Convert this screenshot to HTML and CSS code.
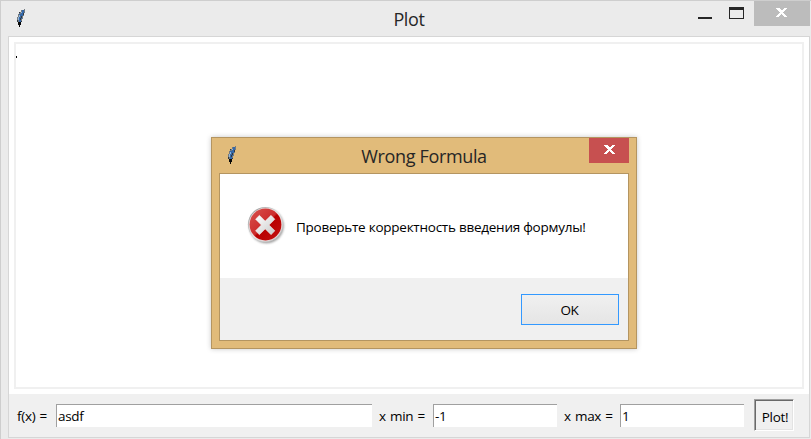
FILE: index.html
```html
<!DOCTYPE html>
<html lang="ru">
<head>
<meta charset="utf-8">
<title>Plot</title>
<link rel="stylesheet" href="styles.css">
</head>
<body>
<svg width="0" height="0" class="defs">
  <symbol id="feather" viewBox="0 0 10 19">
    <path d="M8 0h1v4H8v3H7v3H6v2H5v2H2v-2H1V8h1V5h1V3h2V1h3z" fill="#737a80"/>
    <path d="M7 1h1v3H7v3H6v3H5v3H3v-2H2V8h1V5h2V3h1V1z" fill="#3568a8"/>
    <path d="M3 6h1v2H3v3H2V8h1zM5 3h1v1H5z" fill="#91b5d8"/>
    <path d="M5 7h1v2H5v2H4V9h1zM7 4h1v2H7zM1 11h1v2H1zM5 12h1v1H5zM3 3h1v1H3z" fill="#303840"/>
    <path d="M2 13h3v3H4v2H3v-2H2z" fill="#080808"/>
  </symbol>
  <symbol id="cross" viewBox="0 0 12 9">
    <path d="M0 0h4v1h1v1h2V1h1V0h3v1h-1v1H9v1H8v1H7v1h1v1h1v1h1v1h1v1H8V8H7V7H6V6H5v1H4v1H3v1H0V8h1V7h1V6h1V5h1V4H3V3H2V2H1V1H0z" fill="#fff"/>
  </symbol>
</svg>
<main class="window">
  <header class="titlebar">
    <svg class="app-icon"><use href="#feather"/></svg>
    <h1 class="title">Plot</h1>
    <div class="controls">
      <span class="minimize"></span>
      <span class="maximize"></span>
      <span class="close"><svg width="12" height="9"><use href="#cross"/></svg></span>
    </div>
  </header>
  <section class="client">
    <div class="canvas"><i class="dot"></i></div>
    <form class="toolbar">
      <span class="label label-fx">f(x) =</span><span class="entry entry-fx">asdf</span>
      <span class="label label-min">x min =</span><span class="entry">-1</span>
      <span class="label label-max">x max =</span><span class="entry">1</span>
      <button type="button" class="plot">Plot!</button>
    </form>
  </section>
</main>
<section class="dialog">
  <header class="dialog-bar">
    <svg class="app-icon"><use href="#feather"/></svg>
    <h2 class="title">Wrong Formula</h2>
    <span class="dialog-close"><svg width="12" height="9"><use href="#cross"/></svg></span>
  </header>
  <div class="dialog-body">
    <div class="message">
      <svg class="error" width="40" height="40" viewBox="0 0 40 40">
        <defs>
          <linearGradient id="red" x1="0" y1="0" x2="1" y2="1"><stop offset="0" stop-color="#d9534f"/><stop offset=".49" stop-color="#cc2c2c"/><stop offset=".53" stop-color="#b80000"/><stop offset="1" stop-color="#c41212"/></linearGradient>
          <linearGradient id="rim" x1="0" y1="0" x2="1" y2="1"><stop offset="0" stop-color="#8c8c8c"/><stop offset=".5" stop-color="#e4e4e4"/><stop offset="1" stop-color="#b4b4b4"/></linearGradient>
          <linearGradient id="mark" x1="0" y1="0" x2="1" y2="1"><stop offset="0" stop-color="#fff"/><stop offset="1" stop-color="#c9c9c9"/></linearGradient>
          <filter id="soft"><feGaussianBlur stdDeviation=".8"/></filter>
        </defs>
        <circle cx="19.5" cy="20" r="17.3" fill="#777" opacity=".7" filter="url(#soft)"/>
        <circle cx="18.5" cy="18.5" r="17.6" fill="url(#rim)"/>
        <circle cx="18.5" cy="18.5" r="16.6" fill="#f0dddd"/>
        <circle cx="18.5" cy="18.5" r="15.9" fill="url(#red)"/>
        <path d="M12.4 9.3l5.8 5.8L24 9.3l3.9 3.9-5.8 5.8 5.8 5.8-3.9 3.9-5.8-5.8-5.8 5.8-3.9-3.9 5.8-5.8-5.8-5.8z" fill="url(#mark)" stroke="#ededed" stroke-width=".5" stroke-linejoin="round"/>
      </svg>
      <p class="text">Проверьте корректность введения формулы!</p>
    </div>
    <footer class="actions"><button type="button" class="ok">OK</button></footer>
  </div>
</section>
</body>
</html>
```

FILE: styles.css
```css
* { box-sizing: border-box; }
body { margin: 0; width: 811px; height: 439px; overflow: hidden; font: 13.5px/18px "Open Sans", "Noto Sans", sans-serif; letter-spacing: -0.3px; color: #000; background: #fff; }
h1, h2, p, form { margin: 0; }
button { font: inherit; letter-spacing: inherit; color: #000; padding: 0; border-radius: 0; }
.defs { position: absolute; }
.window { width: 811px; height: 439px; background: #ebebeb; border: 1px solid #cecece; border-width: 1px 0 0 1px; }
.titlebar { height: 35px; display: grid; grid-template-columns: 200px 1fr 200px; }
.app-icon { width: 10px; height: 19px; margin: 8px 0 0 15px; }
.title { font-size: 18px; line-height: 36px; font-weight: 400; text-align: center; letter-spacing: -0.35px; color: #262626; white-space: nowrap; }
.titlebar .title { padding-left: 6px; }
.dialog-bar .title { padding-right: 0; }
.controls { display: flex; justify-content: flex-end; padding-right: 1px; }
.minimize { width: 14px; height: 2px; background: #262626; margin: 16px 17px 0 0; }
.maximize { width: 15px; height: 12px; border: 1px solid #262626; border-top-width: 3px; margin: 6px 10px 0 0; }
.close { width: 56px; height: 25px; background: #bcbcbc; padding: 7px 0 0 22px; line-height: 0; }
.client { width: 802px; height: 402px; margin-left: 7px; border: 1px solid #d6d6d6; background: #fff; display: flex; flex-direction: column; }
.canvas { height: 347px; margin: 5px; border: 2px solid #f0f0f0; }
.dot { display: block; width: 1px; height: 2px; margin-top: 12px; background: #000; }
.toolbar { height: 43px; background: #f0f0f0; display: flex; padding: 5px 15px 0 8px; }
.label { line-height: 34px; white-space: nowrap; word-spacing: 1px; }
.label-fx { width: 39px; }
.label-min { width: 61px; padding-left: 7px; }
.label-max { width: 63px; padding-left: 7px; }
.entry { width: 124px; height: 23px; margin-top: 5px; border: 1px solid #a0a0a0; border-width: 1px 0 0 1px; background: #fff; padding-left: 1px; line-height: 22px; }
.entry-fx { width: 316px; }
.plot { width: 40px; height: 32px; margin-left: 10px; border: 1px solid; border-color: #a0a0a0 #fff #fff #a0a0a0; background: #f0f0f0; box-shadow: inset 1px 1px #696969, inset -1px -1px #e3e3e3; padding: 3px 0 0 2px; }
.dialog { position: absolute; left: 211px; top: 137px; width: 426px; height: 212px; background: #e1bb7a; border: 1px solid #b49561; box-shadow: 0 0 5px rgba(0,0,0,.22); padding: 0 7px 7px; }
.dialog-bar { height: 35px; display: grid; grid-template-columns: 40px 1fr 40px; }
.dialog-bar .app-icon { margin-left: 8px; }
.dialog-close { width: 40px; height: 25px; background: #c75050; padding: 7px 0 0 15px; line-height: 0; }
.dialog-body { height: 168px; border: 1px solid #b49561; background: #fff; }
.message { height: 104px; display: flex; padding: 32px 0 0 27px; }
.text { margin: 12px 0 0 9px; white-space: nowrap; letter-spacing: -0.25px; }
.actions { height: 62px; background: #f0f0f0; display: flex; justify-content: flex-end; padding: 16px 9px 0 0; }
.ok { width: 98px; height: 31px; border: 1px solid #3399ff; background: linear-gradient(#f0f0f0, #e5e5e5); padding: 1px 1px 0 0; }
```
